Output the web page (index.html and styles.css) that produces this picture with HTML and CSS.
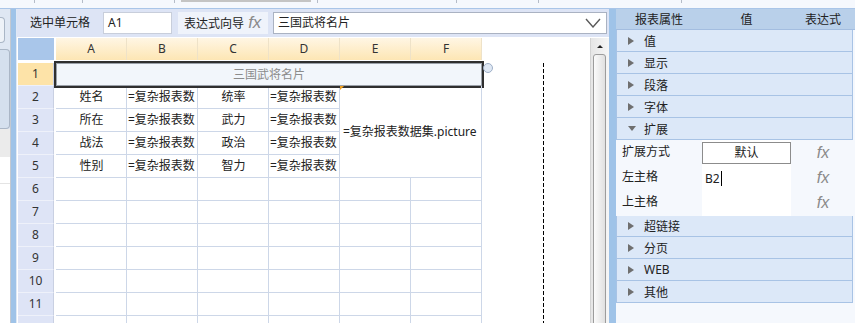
FILE: index.html
```html
<!DOCTYPE html>
<html lang="zh-CN">
<head>
  <meta charset="UTF-8" />
  <title>报表设计器</title>
  <link rel="stylesheet" href="styles.css">
</head>
<body>

<div class="topbar">
  <span class="tick" style="margin-left:34px"></span>
  <span class="tick" style="margin-left:47px"></span>
  <span class="tick" style="margin-left:91px"></span>
  <span class="tab-edge"></span>
  <span class="tick" style="margin-left:6px"></span>
  <span class="tick" style="margin-left:138px"></span>
  <span class="tick" style="margin-left:81px"></span>
  <span class="tick" style="margin-left:142px"></span>
</div>

<div class="main">
  <div class="side">
    <div class="side-box small"></div>
    <div class="side-box large"></div>
    <div class="side-gray"></div>
    <div class="side-white"></div>
  </div>
  <div class="splitter left"></div>

  <div class="editor">
    <div class="toolbar">
      <span class="tb-label">选中单元格</span>
      <div class="tb-input cell-ref">A1</div>
      <div class="tb-wizard">表达式向导 <i class="fx">fx</i></div>
      <div class="tb-input expr">
        <span>三国武将名片</span>
        <svg width="16" height="10" viewBox="0 0 16 10"><path d="M1 1 L8 9 L15 1" fill="none" stroke="#5a5a5a" stroke-width="1.4"/></svg>
      </div>
    </div>

    <div class="sheet-area">
      <div class="sheet">
        <div class="corner"></div>
        <div class="ch">A</div><div class="ch">B</div><div class="ch">C</div>
        <div class="ch">D</div><div class="ch">E</div><div class="ch">F</div>

        <div class="rh sel">1</div>
        <div class="title-cell">三国武将名片<span class="handle"></span></div>

        <div class="rh">2</div>
        <div class="c mid">姓名</div><div class="c">=复杂报表数</div>
        <div class="c mid">统率</div><div class="c">=复杂报表数</div>
        <div class="c pic">=复杂报表数据集.picture</div>

        <div class="rh">3</div>
        <div class="c mid">所在</div><div class="c">=复杂报表数</div>
        <div class="c mid">武力</div><div class="c">=复杂报表数</div>

        <div class="rh">4</div>
        <div class="c mid">战法</div><div class="c">=复杂报表数</div>
        <div class="c mid">政治</div><div class="c">=复杂报表数</div>

        <div class="rh">5</div>
        <div class="c mid">性别</div><div class="c">=复杂报表数</div>
        <div class="c mid">智力</div><div class="c">=复杂报表数</div>

        <div class="rh">6</div>
        <div class="c"></div><div class="c"></div><div class="c"></div><div class="c"></div><div class="c"></div><div class="c"></div>
        <div class="rh">7</div>
        <div class="c"></div><div class="c"></div><div class="c"></div><div class="c"></div><div class="c"></div><div class="c"></div>
        <div class="rh">8</div>
        <div class="c"></div><div class="c"></div><div class="c"></div><div class="c"></div><div class="c"></div><div class="c"></div>
        <div class="rh">9</div>
        <div class="c"></div><div class="c"></div><div class="c"></div><div class="c"></div><div class="c"></div><div class="c"></div>
        <div class="rh">10</div>
        <div class="c"></div><div class="c"></div><div class="c"></div><div class="c"></div><div class="c"></div><div class="c"></div>
        <div class="rh">11</div>
        <div class="c"></div><div class="c"></div><div class="c"></div><div class="c"></div><div class="c"></div><div class="c"></div>
        <div class="rh"></div>
        <div class="c"></div><div class="c"></div><div class="c"></div><div class="c"></div><div class="c"></div><div class="c"></div>
      </div>
      <div class="page-break"></div>
      <div class="vscroll">
        <div class="arrow-up"></div>
        <div class="thumb"></div>
      </div>
    </div>
  </div>

  <div class="splitter right"></div>

  <div class="props">
    <div class="props-head"><span>报表属性</span><span>值</span><span>表达式</span></div>
    <div class="group"><i class="tri"></i>值</div>
    <div class="group"><i class="tri"></i>显示</div>
    <div class="group"><i class="tri"></i>段落</div>
    <div class="group"><i class="tri"></i>字体</div>
    <div class="group"><i class="tri down"></i>扩展</div>
    <div class="prop">
      <span class="prop-name">扩展方式</span>
      <span class="prop-val"><span class="btn">默认</span></span>
      <span class="prop-fx">fx</span>
    </div>
    <div class="prop">
      <span class="prop-name">左主格</span>
      <span class="prop-val text">B2<span class="caret"></span></span>
      <span class="prop-fx">fx</span>
    </div>
    <div class="prop">
      <span class="prop-name">上主格</span>
      <span class="prop-val text"></span>
      <span class="prop-fx">fx</span>
    </div>
    <div class="group"><i class="tri"></i>超链接</div>
    <div class="group"><i class="tri"></i>分页</div>
    <div class="group"><i class="tri"></i>WEB</div>
    <div class="group"><i class="tri"></i>其他</div>
  </div>
</div>

</body>
</html>
```

FILE: styles.css
```css
* {
  margin: 0;
  padding: 0;
  box-sizing: border-box;
}

body {
  width: 855px;
  height: 323px;
  overflow: hidden;
  font-family: "Noto Sans", "Noto Sans CJK SC", sans-serif;
  font-size: 12px;
  color: #222;
  background: #f5f8fd;
}

/* top strip */
.topbar {
  height: 9px;
  display: flex;
  align-items: flex-start;
  background: #f5f8fd;
  border-bottom: 1px solid #a9c5e8;
}

.tick {
  width: 1px;
  height: 3px;
  background: #b5bcc8;
}

.tab-edge {
  width: 130px;
  height: 2px;
  margin-left: 6px;
  background: #c4c4c4;
}

.main {
  display: flex;
  height: 314px;
}

/* left collapsed pane */
.side {
  width: 11px;
  display: flex;
  flex-direction: column;
  border-right: 1px solid #c3c9d2;
  background: #dfe7f3;
}

.side-box {
  width: 5px;
  border: 1px solid #aab6c6;
  border-left: none;
  border-radius: 0 4px 4px 0;
}

.side-box.small {
  height: 26px;
  margin-top: 8px;
  background: #eef2f8;
}

.side-box.large {
  height: 80px;
  margin-top: 6px;
  width: 10px;
  background: #d5e0ee;
}

.side-gray {
  height: 28px;
  background: #ebebeb;
}

.side-white {
  flex: 1;
  background: #fff;
  border-top: 26px solid #fff;
  box-shadow: inset 0 1px 0 #e4e4e4;
}

.splitter {
  background: #9fc3e8;
}

.splitter.left {
  width: 6px;
  border-right: 1px solid #dfe8f5;
}

.splitter.right {
  width: 7px;
}

/* editor */
.editor {
  width: 592px;
  display: flex;
  flex-direction: column;
  background: #dde4f5;
}

.toolbar {
  height: 28px;
  display: flex;
  align-items: flex-start;
  padding: 3px 2px 0 13px;
}

.tb-label {
  width: 73px;
  line-height: 22px;
  color: #222;
}

.tb-input {
  height: 22px;
  background: #fff;
  border: 1px solid #c8cedb;
  line-height: 20px;
  padding-left: 4px;
}

.cell-ref {
  width: 69px;
}

.tb-wizard {
  width: 90px;
  height: 22px;
  margin-left: 6px;
  padding-left: 6px;
  line-height: 22px;
  background: #eff3fb;
}

.fx {
  font-family: "Liberation Sans", sans-serif;
  font-size: 17px;
  color: #8a8a8a;
  margin-left: 1px;
}

.expr {
  flex: 1;
  margin-left: 5px;
  display: flex;
  align-items: center;
  justify-content: space-between;
  padding-right: 5px;
  border-color: #aab2c2;
}

/* sheet */
.sheet-area {
  flex: 1;
  display: flex;
  position: relative;
  background: #fff;
  overflow: hidden;
}

.sheet {
  flex: 1;
  display: grid;
  grid-template-columns: 38px repeat(6, 71px);
  grid-template-rows: 25px repeat(12, 23px);
  align-content: start;
  padding: 1px 0 0 1px;
}

.corner {
  height: 22px;
  margin-right: 2px;
  background: #a9c6ea;
}

.ch {
  height: 22px;
  line-height: 22px;
  text-align: center;
  color: #333;
  background: linear-gradient(#fff6e4, #fde6b4);
  border-right: 1px solid #eee2c8;
}

.rh {
  grid-column: 1;
  margin-right: 2px;
  text-align: center;
  line-height: 22px;
  color: #333;
  background: #dee4f6;
  border-bottom: 1px solid #eef1fa;
  border-right: 1px solid #c9d0e2;
}

.rh.sel {
  background: #fde3a8;
}

.c {
  border-right: 1px solid #cdd7e8;
  border-bottom: 1px solid #cdd7e8;
  line-height: 22px;
  white-space: nowrap;
  overflow: hidden;
  padding-left: 1px;
}

.c.mid {
  text-align: center;
}

.title-cell {
  grid-column: 2 / span 6;
  position: relative;
  text-align: center;
  line-height: 23px;
  color: #8c8c8c;
  background: #f2f6fb;
  outline: 2px solid #2f2f2f;
  box-shadow: inset 0 0 0 1px #9aa0a8;
}

.handle {
  position: absolute;
  right: -11px;
  top: 0;
  width: 10px;
  height: 10px;
  border-radius: 50%;
  border: 1px solid #9fb0c8;
  background: #dfe8f4;
}

.c.pic {
  grid-column: span 2;
  grid-row: span 4;
  position: relative;
  display: flex;
  align-items: center;
  padding-left: 3px;
  overflow: visible;
}

.c.pic::before {
  content: "";
  position: absolute;
  left: 0;
  top: 0;
  border-top: 4px solid #f0a020;
  border-right: 4px solid transparent;
}

.page-break {
  position: absolute;
  left: 526px;
  top: 26px;
  bottom: 0;
  width: 1px;
  background: repeating-linear-gradient(to bottom, #000 0 4px, transparent 4px 6px);
}

.vscroll {
  width: 19px;
  margin-top: 1px;
  padding: 0 3px 0 2px;
  background: linear-gradient(to right, #e6e6e6, #f6f6f6);
  border-left: 1px solid #d3d3d3;
}

.arrow-up {
  width: 0;
  margin: 7px auto 0;
  border-left: 3px solid transparent;
  border-right: 3px solid transparent;
  border-bottom: 3px solid #222;
}

.thumb {
  height: 300px;
  margin-top: 6px;
  border: 1px solid #9c9c9c;
  border-radius: 3px;
  background: linear-gradient(to right, #fbfbfb, #e0e0e0);
}

/* property panel */
.props {
  width: 239px;
  background: #f5f8fd;
}

.props-head {
  height: 21px;
  display: grid;
  grid-template-columns: 86px 89px 1fr;
  align-items: center;
  text-align: center;
  background: #b9d0ea;
  border-bottom: 1px solid #a3bde0;
  color: #222;
}

.group {
  height: 22px;
  margin-right: 2px;
  display: flex;
  align-items: center;
  padding-left: 11px;
  background: #dce8f8;
  border: 1px solid #a8c3e5;
  border-top: none;
}

.tri {
  width: 0;
  margin-right: 10px;
  border-top: 4px solid transparent;
  border-bottom: 4px solid transparent;
  border-left: 6px solid #6f6f6f;
}

.tri.down {
  border-left: 4px solid transparent;
  border-right: 4px solid transparent;
  border-top: 5px solid #6f6f6f;
  border-bottom: none;
  margin-right: 8px;
}

.prop {
  height: 25px;
  display: grid;
  grid-template-columns: 86px 89px 1fr;
  border-bottom: 1px solid #e3e8f0;
}

.prop-name {
  padding-left: 6px;
  line-height: 24px;
  background: #f5f8fd;
}

.prop-val {
  background: #fff;
  display: flex;
  align-items: center;
}

.prop-val.text {
  padding-left: 3px;
}

.btn {
  width: 89px;
  height: 22px;
  margin-top: -1px;
  line-height: 20px;
  text-align: center;
  border: 1px solid #8c8c8c;
  background: #fff;
}

.caret {
  width: 1px;
  height: 15px;
  margin-left: 1px;
  background: #000;
}

.prop-fx {
  text-align: center;
  line-height: 26px;
  font-family: "Liberation Sans", sans-serif;
  font-style: italic;
  font-size: 16px;
  color: #8a8a8a;
  background: #f5f8fd;
}
```
